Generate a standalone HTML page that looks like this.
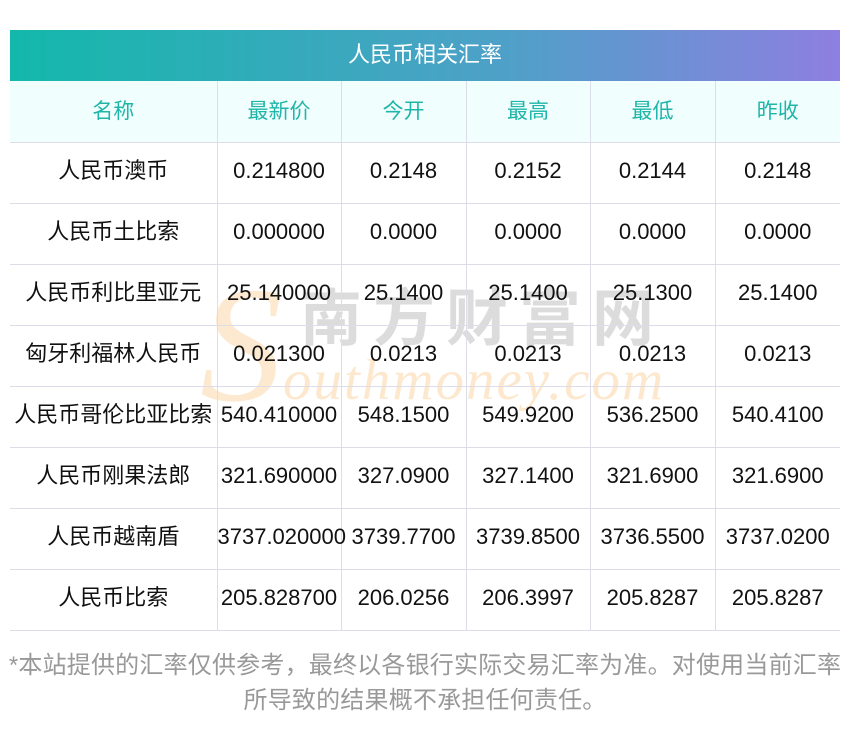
<!DOCTYPE html>
<html><head><meta charset="utf-8"><style>
body{margin:0;width:850px;height:733px;background:#fff;font-family:"Liberation Sans","Noto Sans CJK SC",sans-serif;position:relative;overflow:hidden}
.title{position:absolute;left:10px;top:30px;width:830px;height:51px;background:linear-gradient(90deg,#13b8ab,#4fa0c8 60%,#8e7fe0);color:#fff;font-size:22px;line-height:49px;text-align:center}
table{position:absolute;left:10px;top:81px;border-collapse:collapse;width:830px;table-layout:fixed}
td{height:60px;border:1px solid #dcdde8;text-align:center;font-size:22px;color:#111;padding:0;white-space:nowrap;overflow:visible;line-height:22px}
td div{height:22px;line-height:22px;margin-top:-4px}
tr td:first-child{border-left:none}tr td:last-child{border-right:none}
tr:first-child td{border-top:none;background:#f0fffe;color:#1fb5a8;height:61px}
tr:first-child td div{font-size:21px;margin-top:0}
.wm1{position:absolute;left:300px;top:285px;font-size:62px;color:#d4d4d4;letter-spacing:11px;font-weight:bold;opacity:.8;line-height:70px}
.wm2{position:absolute;left:283px;top:348px;font-family:"Liberation Serif",serif;font-style:italic;font-size:57px;color:#fde3c2;letter-spacing:2px;opacity:.8}
.wmS{position:absolute;left:200px;top:262px;font-family:"Liberation Serif",serif;font-style:italic;font-size:165px;color:#fbe0bc;opacity:.7;line-height:1}
.note{position:absolute;left:-50px;top:648px;width:950px;text-align:center;font-size:24px;letter-spacing:0.2px;color:#999;line-height:35px;white-space:nowrap}
</style></head><body>
<div class="title">人民币相关汇率</div>
<div class="wmS">S</div>
<div class="wm1">南方财富网</div>
<div class="wm2">outhmoney.com</div>
<table>
<colgroup><col style="width:207px"><col style="width:124px"><col style="width:125px"><col style="width:124px"><col style="width:125px"><col style="width:125px"></colgroup>
<tr><td><div>名称</div></td><td><div>最新价</div></td><td><div>今开</div></td><td><div>最高</div></td><td><div>最低</div></td><td><div>昨收</div></td></tr>
<tr><td><div>人民币澳币</div></td><td><div>0.214800</div></td><td><div>0.2148</div></td><td><div>0.2152</div></td><td><div>0.2144</div></td><td><div>0.2148</div></td></tr>
<tr><td><div>人民币土比索</div></td><td><div>0.000000</div></td><td><div>0.0000</div></td><td><div>0.0000</div></td><td><div>0.0000</div></td><td><div>0.0000</div></td></tr>
<tr><td><div>人民币利比里亚元</div></td><td><div>25.140000</div></td><td><div>25.1400</div></td><td><div>25.1400</div></td><td><div>25.1300</div></td><td><div>25.1400</div></td></tr>
<tr><td><div>匈牙利福林人民币</div></td><td><div>0.021300</div></td><td><div>0.0213</div></td><td><div>0.0213</div></td><td><div>0.0213</div></td><td><div>0.0213</div></td></tr>
<tr><td><div>人民币哥伦比亚比索</div></td><td><div>540.410000</div></td><td><div>548.1500</div></td><td><div>549.9200</div></td><td><div>536.2500</div></td><td><div>540.4100</div></td></tr>
<tr><td><div>人民币刚果法郎</div></td><td><div>321.690000</div></td><td><div>327.0900</div></td><td><div>327.1400</div></td><td><div>321.6900</div></td><td><div>321.6900</div></td></tr>
<tr><td><div>人民币越南盾</div></td><td><div>3737.020000</div></td><td><div>3739.7700</div></td><td><div>3739.8500</div></td><td><div>3736.5500</div></td><td><div>3737.0200</div></td></tr>
<tr><td><div>人民币比索</div></td><td><div>205.828700</div></td><td><div>206.0256</div></td><td><div>206.3997</div></td><td><div>205.8287</div></td><td><div>205.8287</div></td></tr>
</table>
<div class="note">*本站提供的汇率仅供参考，最终以各银行实际交易汇率为准。对使用当前汇率<br>所导致的结果概不承担任何责任。</div>
</body></html>
